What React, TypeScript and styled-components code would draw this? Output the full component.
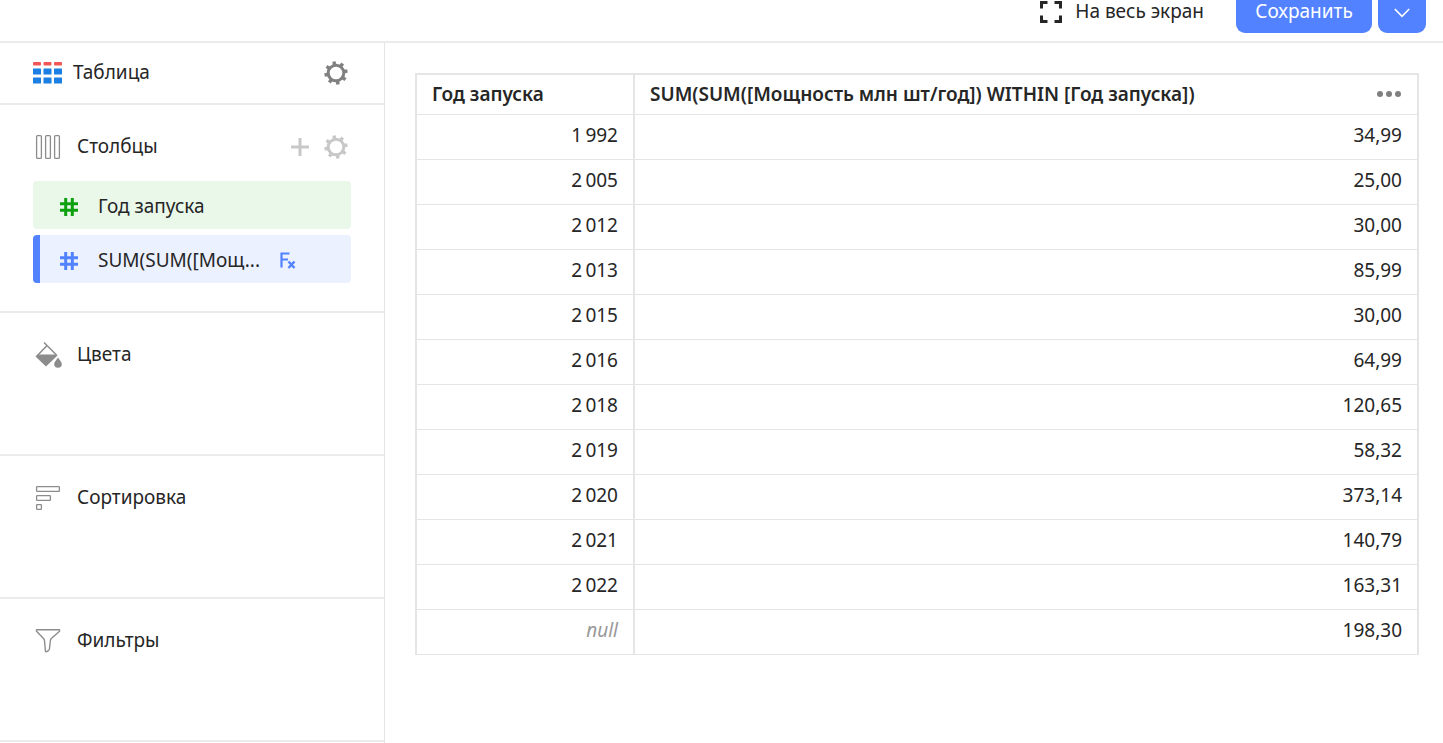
import React from "react";
import styled, { createGlobalStyle, css } from "styled-components";

const GlobalStyle = createGlobalStyle`
  *, *::before, *::after { box-sizing: border-box; }
  body {
    margin: 0;
    background: #fff;
    color: #262626;
    font-family: "Noto Sans", "Open Sans", sans-serif;
    font-size: 19px;
    line-height: 24px;
  }
  button { font: inherit; color: inherit; cursor: pointer; }
`;

const LINE = "#e5e5e5";
const SOFT_LINE = "#ebebeb";
const BLUE = "#5282ff";

const Page = styled.div`
  display: flex;
  flex-direction: column;
  min-height: 100vh;
`;

const TopBar = styled.header`
  display: flex;
  justify-content: flex-end;
  align-items: flex-start;
  height: 43px;
  padding-right: 17px;
  border-bottom: 2px solid ${SOFT_LINE};
`;

const FullscreenButton = styled.button`
  display: flex;
  align-items: center;
  gap: 13px;
  height: 24px;
  margin-right: 26px;
  padding: 0;
  border: 0;
  background: none;
`;

const ButtonLabel = styled.span`
  padding-bottom: 2px;
  line-height: 22px;
`;

const PrimaryButton = styled.button<{ $width: number }>`
  display: flex;
  justify-content: center;
  align-items: flex-start;
  width: ${(p) => p.$width}px;
  height: 33px;
  margin-left: 6px;
  padding: 0;
  border: 0;
  border-radius: 0 0 9px 9px;
  background: ${BLUE};
  color: #fff;
`;

const Body = styled.div`
  display: flex;
  flex: 1;
`;

const Sidebar = styled.aside`
  display: flex;
  flex-direction: column;
  flex: none;
  width: 385px;
  border-right: 1px solid ${LINE};
`;

const Section = styled.section<{ $compact?: boolean; $tall?: boolean }>`
  border-bottom: 2px solid ${SOFT_LINE};
  padding: 0 33px;
  ${(p) =>
    p.$compact
      ? css`
          min-height: 62px;
          padding-top: 17px;
        `
      : css`
          min-height: ${p.$tall ? 208 : 143}px;
          padding-top: 29px;
        `}
`;

const SectionHead = styled.div`
  display: flex;
  align-items: center;
  height: 26px;
`;

const SectionIcon = styled.span<{ $width: number }>`
  display: flex;
  flex: none;
  width: ${(p) => p.$width}px;
`;

const SectionTitle = styled.h2`
  flex: 1;
  margin: 0;
  padding-bottom: 2px;
  font-size: 19px;
  font-weight: 400;
  line-height: 24px;
`;

const IconButton = styled.button<{ $color: string }>`
  display: flex;
  align-items: center;
  justify-content: center;
  width: 36px;
  height: 26px;
  padding: 0;
  border: 0;
  background: none;
  color: ${(p) => p.$color};
`;

const Actions = styled.div`
  display: flex;
  margin-right: -3px;
`;

const FieldList = styled.ul`
  display: flex;
  flex-direction: column;
  gap: 6px;
  margin: 21px 0 0;
  padding: 0;
  list-style: none;
`;

const Field = styled.li<{ $tone: "green" | "blue" }>`
  display: flex;
  align-items: center;
  height: 48px;
  padding-top: 4px;
  border-radius: 4px;
  ${(p) =>
    p.$tone === "green"
      ? css`
          padding-left: 27px;
          background: #eaf8ea;
          --mark: #0fa00f;
        `
      : css`
          padding-left: 20px;
          border-left: 7px solid ${BLUE};
          background: #ebf1fe;
          --mark: ${BLUE};
        `}
  svg { color: var(--mark); flex: none; }
`;

const FieldName = styled.span`
  margin: 0 20px 0 20px;
  padding-bottom: 2px;
  white-space: nowrap;
`;

const Main = styled.main`
  flex: 1;
  min-width: 0;
  padding: 30px 24px 24px 30px;
`;

const Table = styled.table`
  width: 100%;
  border-collapse: separate;
  border-spacing: 0;
  border: solid ${LINE};
  border-width: 2px 0 0 2px;
  table-layout: fixed;
`;

const HeadCell = styled.th<{ $width?: number }>`
  width: ${(p) => (p.$width ? `${p.$width}px` : "auto")};
  height: 40px;
  padding: 0 15px 2px;
  border: solid ${LINE};
  border-width: 0 2px 1px 0;
  font-weight: 600;
  text-align: left;
`;

const HeadContent = styled.div`
  display: flex;
  align-items: center;
  justify-content: space-between;
`;

const MenuButton = styled.button`
  display: flex;
  padding: 0;
  border: 0;
  background: none;
  color: #808080;
`;

const Cell = styled.td<{ $muted?: boolean }>`
  height: 45px;
  padding: 0 15px 4px;
  border: solid ${LINE};
  border-width: 0 2px 1px 0;
  text-align: right;
  ${(p) => p.$muted && "color: #999; font-style: italic;"}
`;

const GearIcon = () => (
  <svg width="24" height="24" viewBox="0 0 24 24" fill="none" stroke="currentColor" aria-hidden="true">
    <circle cx="12" cy="12" r="7.8" strokeWidth="3" />
    {[0, 45, 90, 135, 180, 225, 270, 315].map((a) => (
      <path key={a} d="M12 4V.4" strokeWidth="3.4" transform={`rotate(${a - 10} 12 12)`} />
    ))}
  </svg>
);

const PlusIcon = () => (
  <svg width="18" height="18" viewBox="0 0 18 18" fill="none" stroke="currentColor" strokeWidth="3" aria-hidden="true">
    <path d="M9 0v18M0 9h18" />
  </svg>
);

const TableIcon = () => (
  <svg width="29" height="22" viewBox="0 0 29 22" aria-hidden="true">
    {[0, 10.5, 21].map((x) => (
      <g key={x}>
        <rect x={x} y="0" width="8" height="3.5" rx="1" fill="#f25757" />
        <rect x={x} y="6.5" width="8" height="6" rx=".6" fill="#1b7fe3" />
        <rect x={x} y="15.5" width="8" height="6" rx=".6" fill="#1b7fe3" />
      </g>
    ))}
  </svg>
);

const ColumnsIcon = () => (
  <svg width="30" height="26" viewBox="0 0 30 26" fill="none" stroke="#8c8c8c" strokeWidth="1.3" aria-hidden="true">
    {[3.6, 12.6, 21.6].map((x) => (
      <rect key={x} x={x} y="1.6" width="4.8" height="22.8" rx="1" />
    ))}
  </svg>
);

const ColorsIcon = () => (
  <svg width="30" height="26" viewBox="0 0 30 26" aria-hidden="true">
    <path d="M11 .5l3 3L4 14M14 3.5L23.5 13" fill="none" stroke="#8c8c8c" strokeWidth="1.5" />
    <path d="M4.5 12.5h18.5l1.5 1L13 24.5 2.5 14.5z" fill="#8c8c8c" />
    <path d="M25 15.5c2 3 3.800 4.500 3.800 6.500a3.800 3.800 0 0 1-7.600 0c0-2 1.800-3.500 3.800-6.500z" fill="#8c8c8c" />
  </svg>
);

const SortIcon = () => (
  <svg width="30" height="26" viewBox="0 0 30 26" fill="none" stroke="#8c8c8c" strokeWidth="1.3" aria-hidden="true">
    <rect x="3.6" y="1.6" width="22.8" height="4.8" rx=".6" />
    <rect x="3.6" y="10.6" width="13.8" height="4.8" rx=".6" />
    <rect x="3.6" y="19.6" width="4.8" height="4.8" rx=".6" />
  </svg>
);

const FilterIcon = () => (
  <svg width="30" height="26" viewBox="0 0 30 26" fill="none" stroke="#8c8c8c" strokeWidth="1.4" strokeLinejoin="round" aria-hidden="true">
    <path d="M3.5 1.8h23q.6 1-.5 2L18.3 10.5q-.8.8-.9 2l-1 8.5q-.2 1.5-1.5 2l-1.3.6q-1.1.4-1.2-.8l-.9-10.300q-.1-1.200-1-2L4 3.800q-1-1-.5-2z" />
  </svg>
);

const HashIcon = () => (
  <svg width="18" height="18" viewBox="0 0 18 18" fill="none" stroke="currentColor" strokeWidth="3" aria-hidden="true">
    <path d="M5.7 0v18M12.3 0v18M0 5.7h18M0 12.3h18" />
  </svg>
);

const FormulaIcon = () => (
  <svg width="16" height="18" viewBox="0 0 16 18" fill="none" stroke="currentColor" strokeWidth="2.2" aria-hidden="true">
    <path d="M1.5 15.5V1.500h8M1.5 7.500h6.500" />
    <path d="M8.500 9.500l6 6.500M14.500 9.500l-6 6.500" strokeWidth="2.4" />
  </svg>
);

const FullscreenIcon = () => (
  <svg width="22" height="22" viewBox="0 0 22 22" fill="none" stroke="#262626" strokeWidth="3" aria-hidden="true">
    <path d="M1.5 7.5v-6h6M14.5 1.5h6v6M20.5 14.5v6h-6M7.5 20.5h-6v-6" />
  </svg>
);

const ChevronIcon = () => (
  <svg width="16" height="24" viewBox="0 0 16 24" fill="none" stroke="currentColor" strokeWidth="1.6" aria-hidden="true">
    <path d="M.8 9l7.2 7.3 7.2-7.3" />
  </svg>
);

const DotsIcon = () => (
  <svg width="26" height="6" viewBox="0 0 26 6" fill="currentColor" aria-hidden="true">
    <circle cx="4" cy="3" r="3" />
    <circle cx="13" cy="3" r="3" />
    <circle cx="22" cy="3" r="3" />
  </svg>
);

const rows: [string, string][] = [
  ["1\u2009992", "34,99"],
  ["2\u2009005", "25,00"],
  ["2\u2009012", "30,00"],
  ["2\u2009013", "85,99"],
  ["2\u2009015", "30,00"],
  ["2\u2009016", "64,99"],
  ["2\u2009018", "120,65"],
  ["2\u2009019", "58,32"],
  ["2\u2009020", "373,14"],
  ["2\u2009021", "140,79"],
  ["2\u2009022", "163,31"],
  ["null", "198,30"],
];

const emptySections = [
  { title: "Цвета", Icon: ColorsIcon },
  { title: "Сортировка", Icon: SortIcon },
  { title: "Фильтры", Icon: FilterIcon },
];

export default function App() {
  return (
    <Page>
      <GlobalStyle />
      <TopBar>
        <FullscreenButton type="button">
          <FullscreenIcon />
          <ButtonLabel>На весь экран</ButtonLabel>
        </FullscreenButton>
        <PrimaryButton type="button" $width={136}>
          <ButtonLabel>Сохранить</ButtonLabel>
        </PrimaryButton>
        <PrimaryButton type="button" $width={48} aria-label="Другие варианты сохранения">
          <ChevronIcon />
        </PrimaryButton>
      </TopBar>
      <Body>
        <Sidebar>
          <Section $compact>
            <SectionHead>
              <SectionIcon $width={40}><TableIcon /></SectionIcon>
              <SectionTitle>Таблица</SectionTitle>
              <Actions>
                <IconButton type="button" $color="#808080" aria-label="Настройки таблицы">
                  <GearIcon />
                </IconButton>
              </Actions>
            </SectionHead>
          </Section>
          <Section $tall>
            <SectionHead>
              <SectionIcon $width={44}><ColumnsIcon /></SectionIcon>
              <SectionTitle>Столбцы</SectionTitle>
              <Actions>
                <IconButton type="button" $color="#c8c8c8" aria-label="Добавить столбец">
                  <PlusIcon />
                </IconButton>
                <IconButton type="button" $color="#c8c8c8" aria-label="Настройки столбцов">
                  <GearIcon />
                </IconButton>
              </Actions>
            </SectionHead>
            <FieldList>
              <Field $tone="green">
                <HashIcon />
                <FieldName>Год запуска</FieldName>
              </Field>
              <Field $tone="blue">
                <HashIcon />
                <FieldName>SUM(SUM([Мощ...</FieldName>
                <FormulaIcon />
              </Field>
            </FieldList>
          </Section>
          {emptySections.map(({ title, Icon }) => (
            <Section key={title}>
              <SectionHead>
                <SectionIcon $width={44}><Icon /></SectionIcon>
                <SectionTitle>{title}</SectionTitle>
              </SectionHead>
            </Section>
          ))}
        </Sidebar>
        <Main>
          <Table>
            <thead>
              <tr>
                <HeadCell $width={218} scope="col">Год запуска</HeadCell>
                <HeadCell scope="col">
                  <HeadContent>
                    SUM(SUM([Мощность млн шт/год]) WITHIN [Год запуска])
                    <MenuButton type="button" aria-label="Меню">
                      <DotsIcon />
                    </MenuButton>
                  </HeadContent>
                </HeadCell>
              </tr>
            </thead>
            <tbody>
              {rows.map(([year, sum]) => (
                <tr key={year}>
                  <Cell $muted={year === "null"}>{year}</Cell>
                  <Cell>{sum}</Cell>
                </tr>
              ))}
            </tbody>
          </Table>
        </Main>
      </Body>
    </Page>
  );
}
